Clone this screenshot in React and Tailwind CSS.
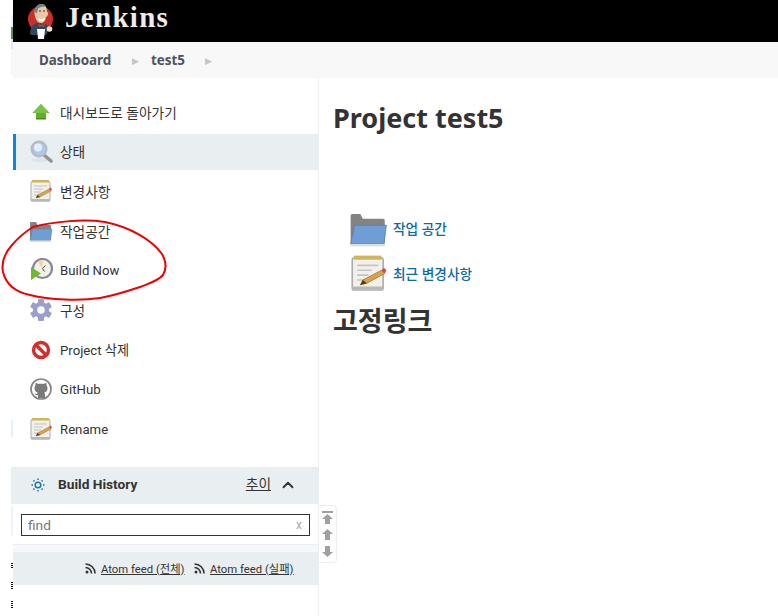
import { ChevronUp } from 'lucide-react';

const FONT = 'font-["Roboto","Noto_Sans_CJK_KR",sans-serif]';

function JenkinsLogo() {
  return (
    <svg width="30" height="35" viewBox="0 0 30 35" className="shrink-0">
      <circle cx="14.500" cy="15" r="12.500" fill="#c9302b" />
      <path d="M4 30c0-6 3-10 7-11l9 1c2 2 3 4 3 6l-3 5H6z" fill="#2f4a5e" />
      <path d="M8.500 8C8.500 3 12 0 15.500 0S21 3 21 8c1 0 1.500 1 1 2.500S20.500 13 20 13c-.5 4-3 6.500-5.500 6-3.500-.5-6-5-6-11z" fill="#e9c9a5" />
      <path d="M8.500 8C8.500 3 12 0 15.500 0c2 0 3.500 1 4.500 3-3-.5-6 0-8 1.500L11 9z" fill="#6d7f8c" />
      <path d="M13 7h2M17 7h2" stroke="#333" strokeWidth="1" />
      <path d="M12 14c2 1.500 5 1.500 7 0l-1 2.500c-2 1-4 1-5 0z" fill="#fff" />
      <path d="M12 20l3.500 1 3.500-1-1 3-2.500-1-2.500 1z" fill="#d33833" />
      <path d="M11 25h8l-1 10h-6z" fill="#fff" />
      <circle cx="23.500" cy="25" r="2.800" fill="#f0e0cc" />
    </svg>
  );
}

function ArrowUpIcon() {
  return (
    <svg width="24" height="24" viewBox="0 0 24 24">
      <path d="M12 4l8.500 9H17v6H7v-6H3.500z" fill="#62ad2c" />
      <path d="M12 4l8.500 9h-17z" fill="#7cc243" />
      <path d="M7 18h10v1.500H7z" fill="#4a8a20" />
    </svg>
  );
}

function SearchIcon() {
  return (
    <svg width="24" height="24" viewBox="0 0 24 24">
      <ellipse cx="11" cy="20" rx="9" ry="2" fill="#dfe3e6" />
      <path d="M15 15l7 6" stroke="#8f9396" strokeWidth="3.500" strokeLinecap="round" />
      <circle cx="10" cy="9" r="7.500" fill="#a9c9ee" stroke="#b6babd" strokeWidth="2" />
      <circle cx="9" cy="7.500" r="4" fill="#e3effa" />
    </svg>
  );
}

function NotepadIcon({ size = 24 }) {
  return (
    <svg width={size} height={size} viewBox="0 0 24 24">
      <rect x="2" y="2.500" width="19" height="19.500" rx="1" fill="#f2f0eb" stroke="#adadad" />
      <rect x="2" y="20" width="19" height="2.500" fill="#b8b8b8" />
      <rect x="3" y="1" width="17" height="2.500" fill="#cdb65c" />
      <path d="M5 7h13M5 10h9M5 13h7M5 16h5" stroke="#c4c4c4" strokeWidth="1" />
      <path d="M7 19l1.500-3L20 10l2 2-11 6z" fill="#dba24a" stroke="#8a6a30" strokeWidth=".4" />
      <path d="M20 10l2 2 1-2-1.500-1.500z" fill="#d9483f" />
      <path d="M7 19l1.500-3 2.500 2z" fill="#4a3d2a" />
    </svg>
  );
}

function FolderIcon({ size = 24 }) {
  return (
    <svg width={size} height={size} viewBox="0 0 24 24">
      <path d="M1 4a1 1 0 011-1h5l1.500 3H21a1 1 0 011 1v14H1z" fill="#838383" />
      <path d="M1 21.500L3.500 10h19.500L21.500 21.500z" fill="#6f9dd6" stroke="#5680b5" strokeWidth=".5" />
      <rect x="1" y="21.500" width="21" height="1.500" fill="#dcdcdc" />
    </svg>
  );
}

function ClockIcon() {
  return (
    <svg width="24" height="24" viewBox="0 0 24 24">
      <circle cx="13.500" cy="10.500" r="9.500" fill="#f3f1e6" stroke="#85859c" strokeWidth="2.200" />
      <path d="M9 3.500l5-.5-1 7z" fill="#e8d98c" />
      <path d="M13.500 10.500l3-3M13.500 10.500l2 3" stroke="#444" strokeWidth="1" />
      <path d="M2 9l10 6.500L2 22z" fill="#6fba2c" />
    </svg>
  );
}

function GearIcon() {
  return (
    <svg width="24" height="24" viewBox="0 0 24 24">
      <g fill="#9a9fce">
        <circle cx="12" cy="12" r="8" />
        <rect x="9" y="1" width="6" height="22" rx="1" />
        <rect x="9" y="1" width="6" height="22" rx="1" transform="rotate(60 12 12)" />
        <rect x="9" y="1" width="6" height="22" rx="1" transform="rotate(120 12 12)" />
      </g>
      <circle cx="12" cy="12" r="3.800" fill="#fff" />
    </svg>
  );
}

function NoIcon() {
  return (
    <svg width="24" height="24" viewBox="0 0 24 24">
      <circle cx="12" cy="12" r="7.500" fill="#f6f6f6" stroke="#d02f2b" strokeWidth="3.400" />
      <path d="M6.500 6.500l11 11" stroke="#d02f2b" strokeWidth="3.400" />
    </svg>
  );
}

function GithubIcon() {
  return (
    <svg width="24" height="24" viewBox="0 0 24 24">
      <circle cx="12" cy="12" r="10" fill="#fff" stroke="#858585" strokeWidth="1.700" />
      <path d="M9 21v-3c-2 .5-3-.5-3.500-2 1 .5 1.500 1 2.500 1 .1-.6.4-1 .8-1.400C6.500 15 5.500 13.500 5.500 11c0-1 .4-2 1-2.600-.2-.8-.1-1.700.2-2.400 1 0 1.900.5 2.600 1 1.700-.5 3.700-.5 5.400 0 .7-.5 1.600-1 2.600-1 .3.700.4 1.600.2 2.400.6.600 1 1.600 1 2.600 0 2.500-1 4-3.300 4.600.5.500.8 1.200.8 2V21z" fill="#7a7a7a" />
    </svg>
  );
}

function SunIcon() {
  return (
    <svg width="14" height="14" viewBox="0 0 14 14" fill="none" stroke="#1f74ad" strokeWidth="1.500">
      <circle cx="7" cy="7" r="2.800" />
      <path d="M7 .5v1.500M7 12v1.500M.5 7h1.500M12 7h1.500" />
      <path d="M2.400 2.400l1 1M10.600 10.600l1 1M2.400 11.600l1-1M10.600 3.400l1-1" />
    </svg>
  );
}

function FeedIcon() {
  return (
    <svg width="11" height="11" viewBox="0 0 11 11" fill="none" stroke="#333" strokeWidth="1.600" className="shrink-0">
      <circle cx="2" cy="9" r="1.500" fill="#333" stroke="none" />
      <path d="M.5 4.500a6 6 0 016 6M.5 1a9.500 9.500 0 019.500 9.500" />
    </svg>
  );
}

const items = [
  { label: '대시보드로 돌아가기', Icon: ArrowUpIcon },
  { label: '상태', Icon: SearchIcon, active: true },
  { label: '변경사항', Icon: NotepadIcon },
  { label: '작업공간', Icon: FolderIcon },
  { label: 'Build Now', Icon: ClockIcon, latin: true },
  { label: '구성', Icon: GearIcon },
  { label: 'Project 삭제', Icon: NoIcon, latin: true },
  { label: 'GitHub', Icon: GithubIcon, latin: true },
  { label: 'Rename', Icon: NotepadIcon, latin: true },
];

export default function App() {
  return (
    <div className={`relative w-[778px] h-[616px] overflow-hidden bg-white pl-[13px] text-[#333] ${FONT}`}>
      <header className="h-[42px] bg-black flex items-center pl-[13px] gap-[9px]">
        <JenkinsLogo />
        <span className='font-["Liberation_Serif",serif] font-bold text-[29px] leading-none text-[#ececec] tracking-[1.300px] -mt-[7px]'>Jenkins</span>
      </header>

      <nav className='h-[36px] bg-[#f8f8f8] flex items-center pl-[26px] pt-[1px] text-[13.400px] font-bold text-[#4d545d] font-["Noto_Sans",sans-serif]'>
        <span className="w-[93px]">Dashboard</span>
        <span className="w-[19px] text-[9px] text-[#c4c4c4] font-normal">▶</span>
        <span className="w-[54px]">test5</span>
        <span className="text-[9px] text-[#c4c4c4] font-normal">▶</span>
      </nav>

      <div className="flex h-[538px]">
        <aside className="w-[306px] shrink-0 border-r border-[#eaeff2] pt-[17px]">
          <ul className="flex flex-col gap-[3.600px] -mt-[1px]">
            {items.map(({ label, Icon, active, latin }) => (
              <li
                key={label}
                className={`h-[36px] flex items-center gap-[7px] ${latin ? 'text-[13.200px]' : 'text-[13.700px]'} ${
                  active ? 'bg-[#e9eef1] border-l-[3px] border-[#0b8ad8] pl-[13px]' : 'pl-[16px]'
                }`}
              >
                <Icon />
                <span className="pt-[2px]">{label}</span>
              </li>
            ))}
          </ul>

          <div className="mt-[20px] h-[37px] bg-[#e9eef1] flex items-center pl-[18px] pr-[21px]">
            <SunIcon />
            <span className="ml-[13px] -mt-[1px] text-[13.700px] font-bold text-[#333]">Build History</span>
            <span className="ml-auto -mt-[1px] text-[13.700px] underline text-[#333]">추이</span>
            <ChevronUp size={18} strokeWidth={2.500} className="ml-[8px] text-[#333]" />
          </div>
          <div className="h-[40px] pl-[8px] pt-[10px]">
            <div className="w-[289px] h-[22px] border border-[#333] flex items-center justify-between pl-[6px] pr-[7px] text-[13.700px] text-[#777]">
              <span className="pt-[1px]">find</span>
              <span className="text-[12px] text-[#aaa]">x</span>
            </div>
          </div>
          <div className="h-[8px] bg-[#f5f7f8] border-t border-[#eaeff2]" />
          <div className="h-[33px] bg-[#e9eef1] flex items-center pl-[72px] text-[11.300px] text-[#333]">
            <FeedIcon />
            <span className="ml-[5px] w-[93px] pt-[4px] underline">Atom feed (전체)</span>
            <FeedIcon />
            <span className="ml-[5px] pt-[4px] underline">Atom feed (실패)</span>
          </div>
        </aside>

        <main className='pl-[14px] pt-[20px] font-["Noto_Sans","Noto_Sans_CJK_KR",sans-serif]'>
          <h1 className="text-[27px] leading-[40px] font-bold text-[#333]">Project test5</h1>
          <div className="mt-[73px] pl-[16px] flex flex-col gap-[8px] text-[13.700px] font-medium text-[#0b6aa2]">
            <div className="h-[35px] flex items-center gap-[5px]">
              <FolderIcon size={39} />
              <span className="pt-[1px]">작업 공간</span>
            </div>
            <div className="h-[39px] flex items-center gap-[5px]">
              <NotepadIcon size={39} />
              <span className="pt-[2px]">최근 변경사항</span>
            </div>
          </div>
          <h2 className="mt-[10px] text-[27px] leading-[36px] font-bold text-[#333]">고정링크</h2>
        </main>
      </div>

      {/* scroll buttons beside the history pane */}
      <div className="absolute left-[319px] top-[505px] w-[18px] h-[58px] border border-l-0 border-[#eaeff2] rounded-r flex flex-col items-center justify-around py-[2px] text-[#a0a0a0]">
        <svg width="11" height="13" viewBox="0 0 11 13" fill="currentColor"><path d="M0 0h11v2H0zM5.500 3L11 8H8v5H3V8H0z" /></svg>
        <svg width="11" height="11" viewBox="0 0 11 11" fill="currentColor"><path d="M5.500 0L11 5H8v6H3V5H0z" /></svg>
        <svg width="11" height="11" viewBox="0 0 11 11" fill="currentColor"><path d="M5.500 11L11 6H8V0H3v6H0z" /></svg>
      </div>

      {/* slivers of the window behind, left edge of the screenshot */}
      <div className="absolute left-[11px] top-[15px] w-[2px] h-[12px] bg-[#eef1f8]" />
      <div className="absolute left-[11px] top-[27px] w-[2px] h-[12px] bg-[#5c8f55]" />
      <div className="absolute left-[11px] top-[39px] w-[2px] h-[10px] bg-[#dfe6f7]" />
      <div className="absolute left-[11px] top-[49px] w-[2px] h-[26px] bg-[#f6f7fb]" />
      <div className="absolute left-[11px] top-[420px] w-[2px] h-[17px] bg-[#e6f0fb]" />
      <div className="absolute left-[11px] top-[467px] w-[2px] h-[37px] bg-[#e9eef1]" />
      <div className="absolute left-[11px] top-[506px] w-[2px] h-[30px] bg-[#eef3fa]" />
      <div className="absolute left-[11px] top-[563px] w-[2px] h-[6px] bg-[repeating-linear-gradient(#111_0_1px,transparent_1px_2px)]" />
      <div className="absolute left-[11px] top-[582px] w-[2px] h-[7px] bg-[repeating-linear-gradient(#111_0_1px,transparent_1px_2px)]" />
      <div className="absolute left-[11px] top-[601px] w-[2px] h-[7px] bg-[repeating-linear-gradient(#111_0_1px,transparent_1px_2px)]" />

      {/* red marker circle drawn on the screenshot */}
      <svg className="absolute left-0 top-0 pointer-events-none" width="778" height="616" fill="none">
        <path
          d="M33 227C55 221 85 219 105 222C130 227 152 240 162 254C167 263 166 270 163 275C158 281 150 283 140 287C125 292 112 296 100 298C80 301 50 300 30 295C15 292 6 284 3 272C1 262 4 254 12 245C18 238 25 232 33 227Z"
          stroke="#ee0000"
          strokeWidth="2"
        />
      </svg>
    </div>
  );
}
